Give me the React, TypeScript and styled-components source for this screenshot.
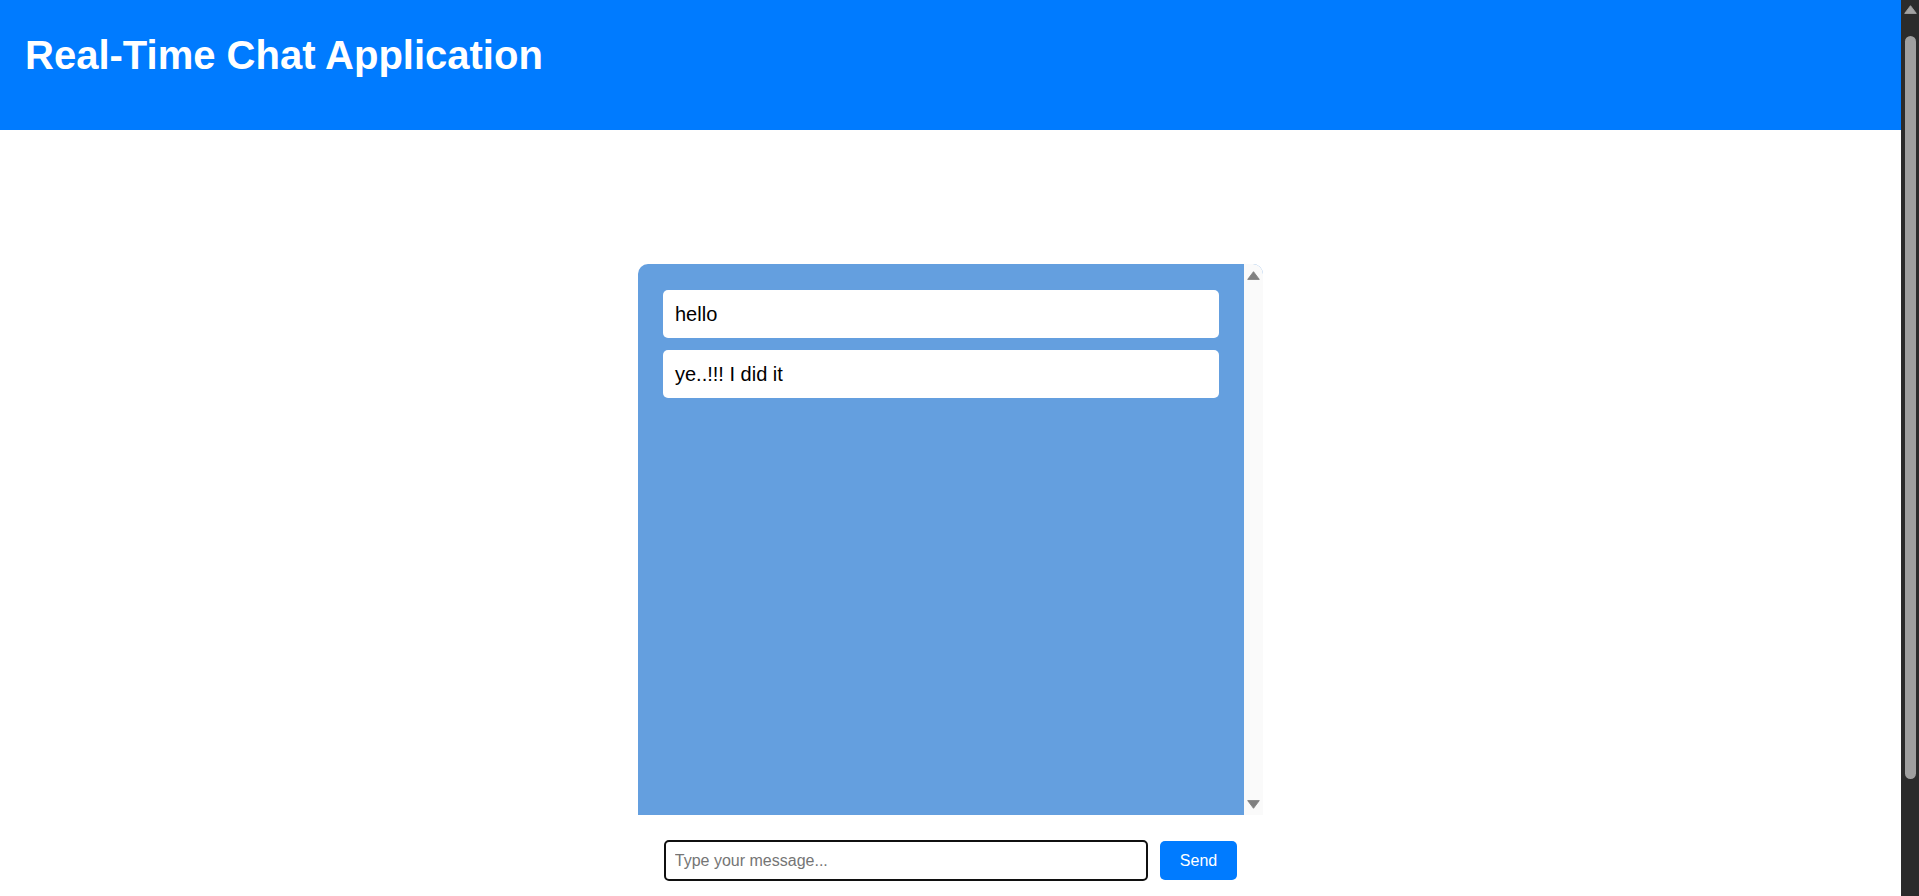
import React from "react";
import styled, { createGlobalStyle } from "styled-components";

const GlobalStyle = createGlobalStyle`
  html, body {
    margin: 0;
    background: #ffffff;
  }
  body {
    color: #000000;
    font-family: "Liberation Sans", Arial, Helvetica, sans-serif;
  }
  * {
    box-sizing: border-box;
  }
`;

const Shell = styled.div`
  display: flex;
  align-items: flex-start;
  width: 100%;
`;

const Page = styled.div`
  flex: 1;
  min-width: 0;
  display: flex;
  flex-direction: column;
`;

/* decorative replica of the window scrollbar */
const PageScrollbar = styled.div`
  position: sticky;
  top: 0;
  width: 18px;
  height: 100vh;
  flex: none;
  background: #2b2b2b;
  display: flex;
  flex-direction: column;
  align-items: center;
  padding-top: 5px;
`;

const PageThumb = styled.div`
  margin-top: 22px;
  width: 11px;
  height: 743px;
  border-radius: 6px;
  background: #9f9f9f;
`;

const Header = styled.header`
  height: 130px;
  background: #007bff;
  padding: 32px 25px 0;
`;

const Title = styled.h1`
  margin: 0;
  color: #ffffff;
  font-size: 40px;
  line-height: 46px;
  font-weight: 700;
`;

const Main = styled.main`
  display: flex;
  flex-direction: column;
  align-items: center;
  padding-top: 134px;
  padding-bottom: 156px;
`;

const ChatBox = styled.div`
  width: 625px;
  height: 551px;
  display: flex;
  border-radius: 10px 10px 0 0;
  overflow: hidden;
  background: #649fdf;
`;

const MessageList = styled.div`
  flex: 1;
  min-width: 0;
  padding: 26px 25px;
  display: flex;
  flex-direction: column;
  gap: 12px;
`;

const ChatScrollbar = styled.div`
  width: 19px;
  flex: none;
  background: #fafafa;
  display: flex;
  flex-direction: column;
  align-items: center;
  justify-content: space-between;
  padding: 7px 0 6px;
`;

const Message = styled.div`
  background: #ffffff;
  border-radius: 5px;
  padding: 12.5px 12px;
  font-size: 20px;
  line-height: 23px;
  color: #000000;
`;

const InputRow = styled.form`
  display: flex;
  align-items: center;
  gap: 12px;
  margin-top: 25px;
`;

const MessageInput = styled.input`
  width: 484px;
  height: 41px;
  border: 2px solid #101010;
  border-radius: 5px;
  padding: 0 9px;
  font-size: 16px;
  font-family: "Liberation Sans", Arial, sans-serif;
  color: #000;
  background: #fff;
  outline: none;
  &::placeholder {
    color: #757575;
  }
`;

const SendButton = styled.button`
  height: 39px;
  padding: 0 20px;
  border: none;
  border-radius: 5px;
  background: #007bff;
  color: #ffffff;
  font-size: 16px;
  font-family: "Liberation Sans", Arial, sans-serif;
  cursor: pointer;
`;

const Arrow = ({ down, color }: { down?: boolean; color: string }) => (
  <svg
    width="13"
    height="9"
    viewBox="0 0 13 9"
    style={{ display: "block", transform: down ? "rotate(180deg)" : undefined }}
  >
    <path
      d="M6.5 0.7 L12.3 8.4 L0.7 8.4 Z"
      fill={color}
      stroke={color}
      strokeWidth="0.9"
      strokeLinejoin="round"
    />
  </svg>
);

const messages = ["hello", "ye..!!! I did it"];

export default function App() {
  return (
    <>
      <GlobalStyle />
      <Shell>
        <Page>
          <Header>
            <Title>Real-Time Chat Application</Title>
          </Header>
          <Main>
            <ChatBox>
              <MessageList>
                {messages.map((m, i) => (
                  <Message key={i}>{m}</Message>
                ))}
              </MessageList>
              <ChatScrollbar>
                <Arrow color="#808080" />
                <Arrow down color="#808080" />
              </ChatScrollbar>
            </ChatBox>
            <InputRow onSubmit={(e) => e.preventDefault()}>
              <MessageInput type="text" placeholder="Type your message..." />
              <SendButton type="submit">Send</SendButton>
            </InputRow>
          </Main>
        </Page>
        <PageScrollbar>
          <Arrow color="#a3a3a3" />
          <PageThumb />
        </PageScrollbar>
      </Shell>
    </>
  );
}
